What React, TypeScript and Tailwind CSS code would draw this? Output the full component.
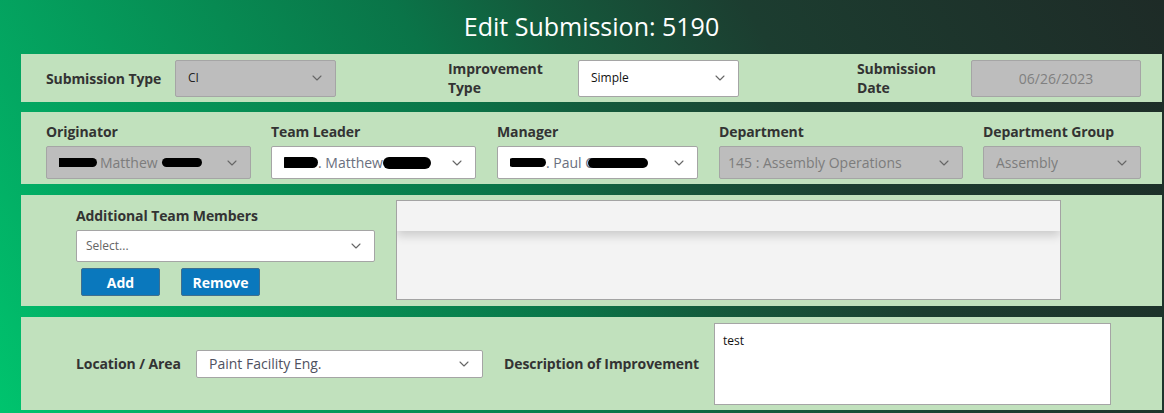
import React from 'react';
import { ChevronDown } from 'lucide-react';

const Chevron: React.FC = () => <ChevronDown className="w-[16px] h-[16px] text-[#666] shrink-0" strokeWidth={1.6} />;

const Blot: React.FC<{ w: number; className?: string }> = ({ w, className }) => (
    <span className={`inline-block h-[9px] bg-black rounded-full ${className ?? ''}`} style={{ width: w }} />
);

const Select: React.FC<{ width: string; height: string; disabled?: boolean; children: React.ReactNode; textClass?: string }> = ({ width, height, disabled, children, textClass }) => (
    <div className={`${width} ${height} shrink-0 flex items-center justify-between pl-[12px] pr-[10px] border border-[#a5a5a5] rounded-[2px] ${disabled ? 'bg-[#bdbdbd]' : 'bg-white'}`}>
        <div className={`flex items-center overflow-hidden whitespace-nowrap ${textClass ?? ''}`}>{children}</div>
        <Chevron />
    </div>
);

const Label: React.FC<{ className?: string; children: React.ReactNode }> = ({ className, children }) => (
    <div className={`text-[14px] font-bold text-[#333] leading-[19px] tracking-[-0.1px] ${className ?? ''}`}>{children}</div>
);

export default function App() {
    return (
        <div className="w-[1164px] h-[413px] overflow-hidden bg-[linear-gradient(60deg,#00c46e_0%,#03a862_14%,#078a52_32%,#0a7448_45%,#145a3c_55%,#1c3d30_70%,#1e2b27_100%)] font-['Open_Sans',sans-serif]">
            <h1 className="ml-[21px] w-[1141px] h-[54px] flex items-center justify-center text-white text-[25px] leading-none pb-[2px]">
                Edit Submission: 5190
            </h1>

            {/* row 1 */}
            <div className="ml-[21px] w-[1141px] h-[48px] bg-[#c1e1bd] flex items-center pl-[25px]">
                <Label className="w-[129px]">Submission Type</Label>
                <Select width="w-[161px]" height="h-[37px]" disabled textClass="text-[12px] text-[#222]">CI</Select>
                <Label className="ml-[112px] w-[130px]">Improvement<br />Type</Label>
                <Select width="w-[161px]" height="h-[37px]" textClass="text-[12px] text-[#111]">Simple</Select>
                <Label className="ml-[118px] w-[114px]">Submission<br />Date</Label>
                <div className="w-[170px] h-[37px] bg-[#bdbdbd] border border-[#a5a5a5] rounded-[2px] flex items-center justify-center text-[14px] text-[#808080]">
                    06/26/2023
                </div>
            </div>

            {/* row 2 */}
            <div className="ml-[21px] mt-[10px] w-[1141px] h-[72px] bg-[#c1e1bd] flex pl-[25px] pt-[10px] gap-[20px]">
                <div className="w-[205px]">
                    <Label className="leading-[20px]">Originator</Label>
                    <div className="mt-[4px]">
                        <Select width="w-[205px]" height="h-[33px]" disabled textClass="text-[14px] text-[#7c7c7c]">
                            <Blot w={46} className="-ml-[8px] mr-[3px]" />Matthew<Blot w={40} className="ml-[4px]" />
                        </Select>
                    </div>
                </div>
                <div className="w-[205px]">
                    <Label className="leading-[20px]">Team Leader</Label>
                    <div className="mt-[4px]">
                        <Select width="w-[205px]" height="h-[33px]" textClass="text-[14px] text-[#6a6f7e]">
                            <Blot w={38} className="-ml-[4px] h-[11px]" />. Matthew<Blot w={48} className="h-[12px]" />
                        </Select>
                    </div>
                </div>
                <div className="w-[201px] ml-[1px]">
                    <Label className="leading-[20px]">Manager</Label>
                    <div className="mt-[4px]">
                        <Select width="w-[201px]" height="h-[33px]" textClass="text-[14px] text-[#6a6f7e]">
                            <Blot w={38} className="-ml-[2px]" />. Paul C<Blot w={60} className="-ml-[6px] h-[10px]" />
                        </Select>
                    </div>
                </div>
                <div className="w-[244px] ml-[1px]">
                    <Label className="leading-[20px]">Department</Label>
                    <div className="mt-[4px]">
                        <Select width="w-[244px]" height="h-[33px]" disabled textClass="text-[14px] text-[#7c7c7c] -ml-[4px]">
                            145 : Assembly Operations
                        </Select>
                    </div>
                </div>
                <div className="w-[158px]">
                    <Label className="leading-[20px]">Department Group</Label>
                    <div className="mt-[4px]">
                        <Select width="w-[158px]" height="h-[33px]" disabled textClass="text-[14px] text-[#7c7c7c]">
                            Assembly
                        </Select>
                    </div>
                </div>
            </div>

            {/* row 3 */}
            <div className="ml-[21px] mt-[11px] w-[1141px] h-[111px] bg-[#c1e1bd] flex pl-[55px]">
                <div className="w-[299px] pt-[11px]">
                    <Label className="leading-[20px]">Additional Team Members</Label>
                    <div className="mt-[4px]">
                        <Select width="w-[299px]" height="h-[32px]" textClass="text-[12px] text-[#666] -ml-[3px]">Select...</Select>
                    </div>
                    <div className="flex gap-[21px] ml-[5px] mt-[6px]">
                        <button className="w-[79px] h-[28px] bg-[#0a78bd] border border-[#3f6f8f] rounded-[2px] text-white text-[14px] font-bold">Add</button>
                        <button className="w-[79px] h-[28px] bg-[#0a78bd] border border-[#3f6f8f] rounded-[2px] text-white text-[14px] font-bold">Remove</button>
                    </div>
                </div>
                <div className="ml-[21px] mt-[5px] w-[665px] h-[100px] bg-[#f3f3f3] border border-[#a3a3a3] overflow-hidden">
                    <div className="h-[30px] bg-[#f3f3f3] shadow-[0_5px_9px_rgba(0,0,0,0.16)]" />
                </div>
            </div>

            {/* row 4 */}
            <div className="ml-[21px] mt-[11px] w-[1141px] h-[93px] bg-[#c1e1bd] flex items-center pl-[55px]">
                <Label className="w-[120px]">Location / Area</Label>
                <Select width="w-[287px]" height="h-[28px]" textClass="text-[14px] text-[#4f5160]">Paint Facility Eng.</Select>
                <Label className="ml-[21px] w-[210px]">Description of Improvement</Label>
                <div className="w-[397px] h-[82px] bg-white border border-[#a5a5a5] px-[8px] pt-[8px] text-[12px] text-[#111]">test</div>
            </div>
        </div>
    );
}
